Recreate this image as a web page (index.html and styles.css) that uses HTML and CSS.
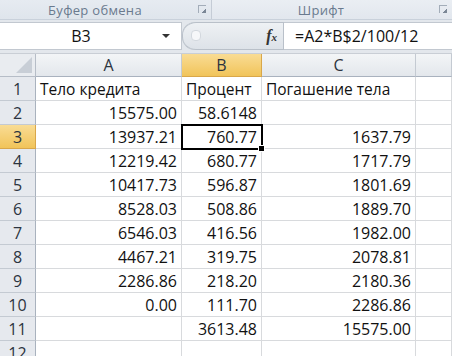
FILE: index.html
```html
<!DOCTYPE html>
<html lang="ru">
<head>
    <meta charset="UTF-8">
    <title>Кредит</title>
    <link rel="stylesheet" href="styles.css">
</head>
<body>

<div class="ribbon">
    <div class="group group-clip">
        <span class="group-name">Буфер обмена</span>
        <span class="launcher"></span>
    </div>
    <div class="group group-font">
        <span class="group-name">Шрифт</span>
        <span class="launcher"></span>
    </div>
</div>

<div class="formula-bar">
    <div class="name-box">
        <span class="cell-ref">B3</span>
        <span class="drop"></span>
    </div>
    <div class="fx-zone">
        <span class="grip"></span>
        <span class="fx">f<small>x</small></span>
    </div>
    <div class="formula">=A2*B$2/100/12</div>
</div>

<div class="sheet">
    <div class="corner"><span class="tri"></span></div>
    <div class="col-head">A</div>
    <div class="col-head active">B</div>
    <div class="col-head">C</div>
    <div class="col-head"></div>

    <div class="row-head">1</div>
    <div class="cell">Тело кредита</div>
    <div class="cell">Процент</div>
    <div class="cell">Погашение тела</div>
    <div class="cell"></div>

    <div class="row-head">2</div>
    <div class="cell num">15575.00</div>
    <div class="cell num">58.6148</div>
    <div class="cell num"></div>
    <div class="cell"></div>

    <div class="row-head active">3</div>
    <div class="cell num">13937.21</div>
    <div class="cell num selected">760.77<span class="handle"></span></div>
    <div class="cell num">1637.79</div>
    <div class="cell"></div>

    <div class="row-head">4</div>
    <div class="cell num">12219.42</div>
    <div class="cell num">680.77</div>
    <div class="cell num">1717.79</div>
    <div class="cell"></div>

    <div class="row-head">5</div>
    <div class="cell num">10417.73</div>
    <div class="cell num">596.87</div>
    <div class="cell num">1801.69</div>
    <div class="cell"></div>

    <div class="row-head">6</div>
    <div class="cell num">8528.03</div>
    <div class="cell num">508.86</div>
    <div class="cell num">1889.70</div>
    <div class="cell"></div>

    <div class="row-head">7</div>
    <div class="cell num">6546.03</div>
    <div class="cell num">416.56</div>
    <div class="cell num">1982.00</div>
    <div class="cell"></div>

    <div class="row-head">8</div>
    <div class="cell num">4467.21</div>
    <div class="cell num">319.75</div>
    <div class="cell num">2078.81</div>
    <div class="cell"></div>

    <div class="row-head">9</div>
    <div class="cell num">2286.86</div>
    <div class="cell num">218.20</div>
    <div class="cell num">2180.36</div>
    <div class="cell"></div>

    <div class="row-head">10</div>
    <div class="cell num">0.00</div>
    <div class="cell num">111.70</div>
    <div class="cell num">2286.86</div>
    <div class="cell"></div>

    <div class="row-head">11</div>
    <div class="cell num"></div>
    <div class="cell num">3613.48</div>
    <div class="cell num">15575.00</div>
    <div class="cell"></div>

    <div class="row-head">12</div>
    <div class="cell"></div>
    <div class="cell"></div>
    <div class="cell"></div>
    <div class="cell"></div>
</div>

</body>
</html>
```

FILE: styles.css
```css
body {
    margin: 0;
    width: 452px;
    height: 356px;
    overflow: hidden;
    background: #ffffff;
    font-family: "Open Sans", "Noto Sans", sans-serif;
}

/* ribbon group captions */
.ribbon {
    display: flex;
    height: 19px;
    background: linear-gradient(#e6ebf1, #dfe5ec);
    border-bottom: 1px solid #c9d1db;
}

.group {
    position: relative;
    display: flex;
    align-items: center;
    justify-content: center;
    font-size: 13px;
    letter-spacing: 0.3px;
    color: #6a7a8e;
}

.group-clip {
    width: 211px;
    border-right: 1px solid #c5ccd6;
}

.group-font {
    flex: 1;
    background: linear-gradient(#eaeef3, #e2e7ee);
}

.group-clip .group-name {
    margin-right: 21px;
}

.group-font .group-name {
    margin-right: 22px;
}

.launcher {
    position: absolute;
    right: 5px;
    top: 5px;
    width: 7px;
    height: 7px;
    border-left: 1px solid #a3adb9;
    border-top: 1px solid #a3adb9;
}

.launcher::after {
    content: "";
    position: absolute;
    right: 0;
    bottom: 0;
    width: 4px;
    height: 4px;
    background: linear-gradient(135deg, transparent 45%, #7b8796 50%);
}

/* name box + formula */
.formula-bar {
    display: flex;
    height: 28px;
    padding: 2px 0 3px;
    background: #e3e7ec;
    border-bottom: 1px solid #c9ced5;
}

.name-box {
    position: relative;
    width: 182px;
    display: flex;
    align-items: center;
    background: #ffffff;
    border: 1px solid #c2c8d0;
    border-left: none;
    box-sizing: border-box;
}

.cell-ref {
    width: 162px;
    text-align: center;
    font-size: 16px;
    color: #111;
}

.drop {
    width: 0;
    height: 0;
    border-left: 4px solid transparent;
    border-right: 4px solid transparent;
    border-top: 4px solid #333;
}

.fx-zone {
    position: relative;
    width: 101px;
    display: flex;
    align-items: center;
    justify-content: flex-end;
    background: linear-gradient(#eef1f4, #dde2e8);
    border: 1px solid #b9c0c9;
    border-left: none;
    border-radius: 13px 0 0 13px;
    box-sizing: border-box;
    margin-left: 1px;
    box-shadow: -1px 0 0 #b9c0c9;
}

.grip {
    position: absolute;
    left: 8px;
    top: 7px;
    width: 8px;
    height: 9px;
    border-radius: 4px;
    background: #f6f7f9;
    border: 1px solid #d3d8de;
}

.fx {
    font-family: "Liberation Serif", serif;
    font-style: italic;
    font-weight: bold;
    font-size: 16px;
    color: #333;
    margin-right: 6px;
}

.fx small {
    font-size: 11px;
}

.formula {
    flex: 1;
    display: flex;
    align-items: center;
    padding-left: 11px;
    background: #ffffff;
    border-top: 1px solid #c2c8d0;
    border-bottom: 1px solid #c2c8d0;
    font-size: 16px;
    color: #111;
}

/* the grid */
.sheet {
    display: grid;
    grid-template-columns: 36px 146px 80px 154px 1fr;
    grid-template-rows: 23px repeat(12, 24px);
    font-size: 15.5px;
    color: #111;
}

.sheet > div {
    box-sizing: border-box;
    border-right: 1px solid #d8dadd;
    border-bottom: 1px solid #d8dadd;
    display: flex;
    align-items: center;
    padding: 0 4px;
    white-space: nowrap;
}

.num {
    justify-content: flex-end;
    font-size: 16px;
}

.corner {
    position: relative;
    background: #e9ecf0;
    border-right-color: #b6bdc7 !important;
    border-bottom-color: #b6bdc7 !important;
}

.tri {
    position: absolute;
    right: 3px;
    bottom: 3px;
    width: 0;
    height: 0;
    border-left: 16px solid transparent;
    border-bottom: 16px solid #c8ced6;
}

.col-head {
    justify-content: center;
    background: linear-gradient(#f3f5f7, #e3e7ec);
    border-right-color: #c4cad2 !important;
    border-bottom-color: #a9b2be !important;
    color: #2c3440;
    font-size: 16px;
}

.row-head {
    justify-content: center;
    background: #e6e9ee;
    border-right-color: #a9b2be !important;
    border-bottom-color: #c4cad2 !important;
    color: #2c3440;
    font-size: 16px;
}

.col-head.active,
.row-head.active {
    background: linear-gradient(#f9dc94, #f1c45a);
    border-right-color: #d9a74a !important;
    border-bottom-color: #d9a74a !important;
}

.selected {
    position: relative;
    outline: 2px solid #000;
    outline-offset: -1px;
    z-index: 1;
}

.handle {
    position: absolute;
    right: -4px;
    bottom: -4px;
    width: 5px;
    height: 5px;
    background: #000;
    border: 1px solid #fff;
}
```
